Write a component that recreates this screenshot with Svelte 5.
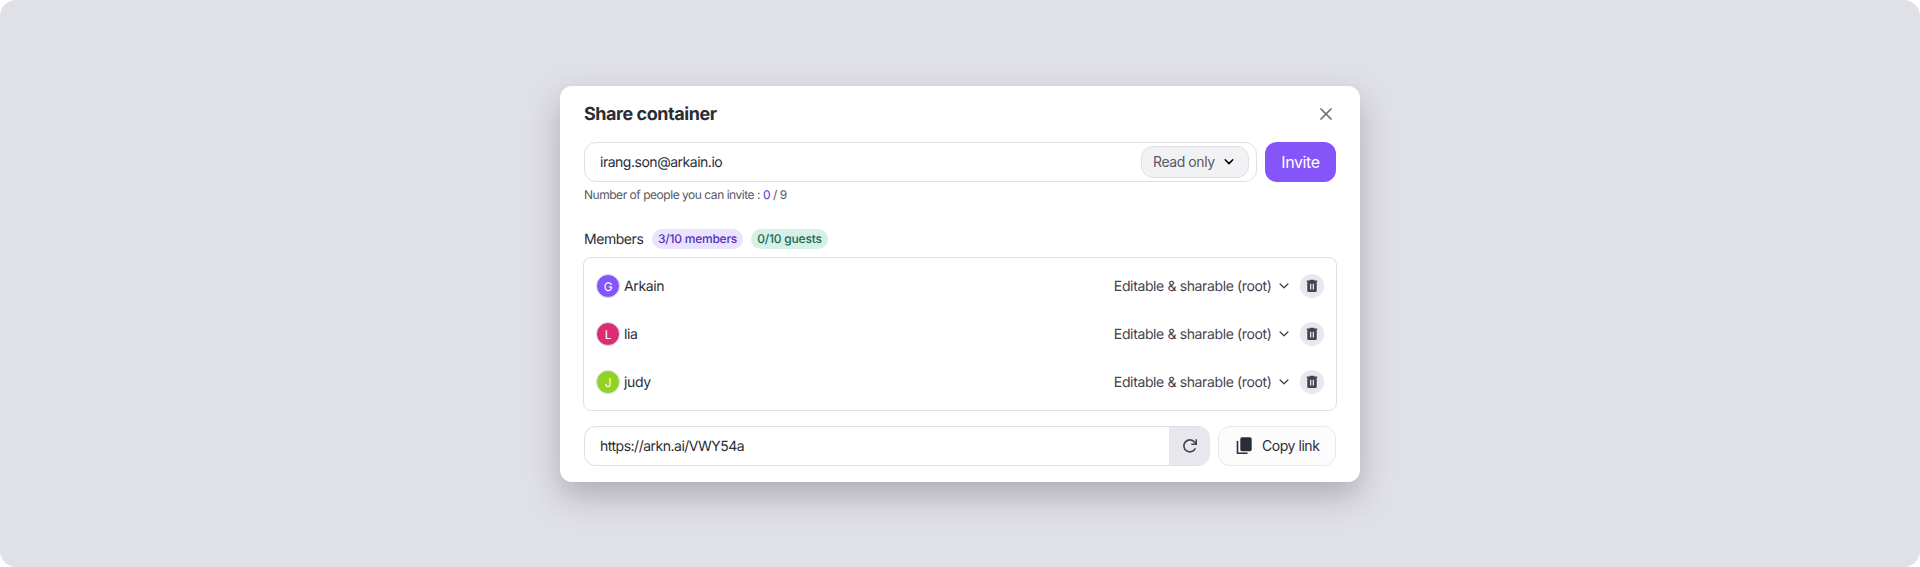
<script>
  const members = [
    { name: 'Arkain', initial: 'G', color: '#8655fa' },
    { name: 'lia', initial: 'L', color: '#dc2d74' },
    { name: 'judy', initial: 'J', color: '#8fd424' }
  ];
</script>

<main class="stage">
  <section class="dialog">
    <header class="head">
      <h1>Share container</h1>
      <button class="close" aria-label="Close">
        <svg width="20" height="20" viewBox="0 0 20 20"><path d="M5 5l10 10M15 5L5 15" /></svg>
      </button>
    </header>

    <div class="invite-row">
      <div class="field email">
        <span class="email-text">irang.son@arkain.io</span>
        <button class="role">
          <span>Read only</span>
          <svg width="10" height="8" viewBox="0 0 10 8"><path d="M1.2 1.8L5 5.6l3.8-3.8" /></svg>
        </button>
      </div>
      <button class="invite"><span>Invite</span></button>
    </div>
    <p class="quota">Number of people you can invite : <b>0</b> / 9</p>

    <div class="members-head">
      <h2>Members</h2>
      <span class="badge violet"><span>3/10 members</span></span>
      <span class="badge green"><span>0/10 guests</span></span>
    </div>

    <ul class="list">
      {#each members as m}
        <li>
          <span class="avatar" style="background:{m.color}">{m.initial}</span>
          <span class="name">{m.name}</span>
          <span class="perm">Editable &amp; sharable (root)</span>
          <svg class="chev" width="10" height="8" viewBox="0 0 10 8"><path d="M1.1 2L5 5.8 8.9 2" /></svg>
          <button class="trash" aria-label="Remove">
            <svg width="12" height="14" viewBox="0 0 12 14">
              <path fill-rule="evenodd" d="M3.800 .8h4.400v.7h3V3H.8V1.500h3zM1.300 3h9.400v8.700q0 1.300-1.300 1.300H2.600q-1.300 0-1.300-1.300zM4 4.700v5.900h1.300V4.700zM6.700 4.700v5.900H8V4.700z" />
            </svg>
          </button>
        </li>
      {/each}
    </ul>

    <div class="link-row">
      <div class="field link">
        <span class="url">https://arkn.ai/VWY54a</span>
        <button class="refresh" aria-label="Refresh link">
          <svg width="16" height="16" viewBox="0 0 16 16">
            <path d="M13.400 10.200A6 6 0 1 1 12.600 4.200L14.200 5.800" />
            <path d="M14.200 1.300v4.900H9.300" />
          </svg>
        </button>
      </div>
      <button class="copy">
        <svg width="16" height="18" viewBox="0 0 16 18">
          <rect x="4.300" y="0.300" width="11.400" height="14" rx="1.700" />
          <path d="M1.500 4v12.200h10" />
        </svg>
        <span>Copy link</span>
      </button>
    </div>
  </section>
</main>

<style>
  :global(body) { margin: 0; background: #fff; }
  * { box-sizing: border-box; }
  .stage {
    height: 567px;
    padding-top: 86px;
    border-radius: 16px;
    background: #e0e1e6;
    font-family: Inter, "Liberation Sans", sans-serif;
    font-size: 14px;
    font-weight: 420;
    letter-spacing: -0.37px;
    text-rendering: geometricPrecision;
    color: #2b2d36;
    overflow: hidden;
  }
  h1, h2, p, ul { margin: 0; padding: 0; }
  button { font: inherit; letter-spacing: inherit; color: inherit; padding: 0; border: 0; background: none; }
  svg { display: block; flex: none; }
  .dialog {
    width: 800px;
    height: 396px;
    margin: 0 auto;
    padding: 16px 24px;
    border-radius: 12px;
    background: #fff;
    box-shadow: 0 14px 32px rgba(43, 36, 56, 0.28);
  }
  .head { display: flex; align-items: center; justify-content: space-between; height: 24px; }
  h1 { padding-top: 2px; font-size: 18px; line-height: 24px; font-weight: 700; letter-spacing: -0.45px; }
  .close path { fill: none; stroke: #6b6c7e; stroke-width: 1.7; stroke-linecap: round; }
  .invite-row { display: flex; gap: 8px; margin-top: 16px; }
  .field {
    display: flex;
    align-items: center;
    height: 40px;
    border: 1px solid #dfe0e5;
    border-radius: 12px;
  }
  .email { flex: 1; padding: 0 7px 0 15px; justify-content: space-between; }
  .email-text { letter-spacing: -0.48px; }
  .role {
    display: flex;
    align-items: center;
    justify-content: space-between;
    width: 108px;
    height: 32px;
    padding: 0 14px 0 11px;
    border: 1px solid #dfe0e5;
    border-radius: 12px;
    background: #f2f2f4;
    color: #565866;
    letter-spacing: -0.42px;
  }
  .role span, .copy span { padding-bottom: 1px; }
  .role path { fill: none; stroke: #000; stroke-width: 1.5; stroke-linecap: round; stroke-linejoin: round; }
  .invite { width: 71px; height: 40px; border-radius: 12px; background: #8655fa; color: #fff; font-size: 16px; }
  .quota { margin-top: 5px; font-size: 12px; line-height: 16px; font-weight: 400; letter-spacing: -0.47px; color: #565866; }
  .quota b { font-weight: 400; color: #6035dc; }
  .members-head { display: flex; align-items: center; height: 20px; margin-top: 26px; }
  h2 { width: 68px; padding-top: 1px; font-size: 14px; line-height: 20px; font-weight: 420; letter-spacing: -0.45px; }
  .badge {
    display: flex;
    align-items: center;
    justify-content: center;
    height: 20px;
    border-radius: 10px;
    font-size: 12px;
    font-weight: 500;
    letter-spacing: -0.22px;
  }
  .badge span { line-height: 14px; padding-bottom: 1px; }
  .violet { width: 91px; margin-right: 8px; background: #eae3fe; color: #5530c0; }
  .green { width: 77px; background: #d6f0e7; color: #206952; }
  .list {
    height: 154px;
    margin: 8px -1px 0;
    padding: 4px 12px 4px 12px;
    border: 1px solid #dfe0e5;
    border-radius: 8px;
    list-style: none;
  }
  li { display: flex; align-items: center; height: 48px; }
  .avatar {
    display: flex;
    align-items: center;
    justify-content: center;
    width: 24px;
    height: 24px;
    border: 1px solid #dfe0e5;
    border-radius: 50%;
    color: #fff;
    font-size: 12px;
  }
  .name { margin-left: 4px; }
  .perm { margin-left: auto; color: #42444f; }
  .chev { margin: 0 11px 0 7.5px; }
  .chev path { fill: none; stroke: #42444f; stroke-width: 1.300; stroke-linecap: round; stroke-linejoin: round; }
  .trash {
    display: flex;
    align-items: center;
    justify-content: center;
    width: 24px;
    height: 24px;
    border-radius: 50%;
    background: #e8e7ee;
  }
  .trash path { fill: #42444f; }
  .link-row { display: flex; gap: 8px; margin-top: 15px; }
  .link { flex: 1; padding-left: 15px; justify-content: space-between; overflow: hidden; border-right: 0; }
  .url { font-weight: 400; letter-spacing: -0.5px; }
  .refresh {
    display: flex;
    align-items: center;
    justify-content: center;
    width: 41px;
    height: 40px;
    background: #e8e7ee;
  }
  .refresh path { fill: none; stroke: #42444f; stroke-width: 1.600; }
  .copy {
    display: flex;
    align-items: center;
    gap: 10px;
    width: 118px;
    height: 40px;
    padding-left: 17px;
    border: 1px solid #e8e7ee;
    border-radius: 12px;
    background: #fcfcfd;
    letter-spacing: -0.45px;
  }
  .copy rect { fill: #2b2d36; }
  .copy path { fill: none; stroke: #2b2d36; stroke-width: 1.600; stroke-linejoin: round; }
</style>
